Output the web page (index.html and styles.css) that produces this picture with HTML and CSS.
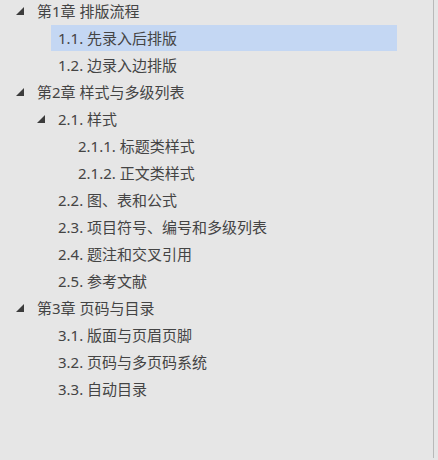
FILE: index.html
```html
<!DOCTYPE html>
<html lang="zh-CN">
<head>
<meta charset="utf-8">
<link rel="stylesheet" href="styles.css">
</head>
<body>
<div class="pane">
  <ul class="tree">
    <li class="row l1"><span class="tog"><svg viewBox="0 0 8 8" width="8" height="8"><polygon points="8,0 8,8 0,8"/></svg></span><span class="label">第1章 排版流程</span></li>
    <li class="row l2"><span class="tog"></span><span class="label sel">1.1. 先录入后排版</span></li>
    <li class="row l2"><span class="tog"></span><span class="label">1.2. 边录入边排版</span></li>
    <li class="row l1"><span class="tog"><svg viewBox="0 0 8 8" width="8" height="8"><polygon points="8,0 8,8 0,8"/></svg></span><span class="label">第2章 样式与多级列表</span></li>
    <li class="row l2"><span class="tog"><svg viewBox="0 0 8 8" width="8" height="8"><polygon points="8,0 8,8 0,8"/></svg></span><span class="label">2.1. 样式</span></li>
    <li class="row l3"><span class="tog"></span><span class="label">2.1.1. 标题类样式</span></li>
    <li class="row l3"><span class="tog"></span><span class="label">2.1.2. 正文类样式</span></li>
    <li class="row l2"><span class="tog"></span><span class="label">2.2. 图、表和公式</span></li>
    <li class="row l2"><span class="tog"></span><span class="label">2.3. 项目符号、编号和多级列表</span></li>
    <li class="row l2"><span class="tog"></span><span class="label">2.4. 题注和交叉引用</span></li>
    <li class="row l2"><span class="tog"></span><span class="label">2.5. 参考文献</span></li>
    <li class="row l1"><span class="tog"><svg viewBox="0 0 8 8" width="8" height="8"><polygon points="8,0 8,8 0,8"/></svg></span><span class="label">第3章 页码与目录</span></li>
    <li class="row l2"><span class="tog"></span><span class="label">3.1. 版面与页眉页脚</span></li>
    <li class="row l2"><span class="tog"></span><span class="label">3.2. 页码与多页码系统</span></li>
    <li class="row l2"><span class="tog"></span><span class="label">3.3. 自动目录</span></li>
  </ul>
</div>
</body>
</html>
```
FILE: styles.css
```css
html, body {
  margin: 0;
  padding: 0;
  background: #e6e6e6;
}
body {
  width: 438px;
  height: 460px;
  overflow: hidden;
  font-family: "Noto Sans", "Noto Sans CJK SC", sans-serif;
  font-size: 15px;
  color: #444444;
}
.pane {
  width: 433px;
  height: 460px;
  border-right: 1px solid #b9b9b9;
  box-sizing: content-box;
}
.tree {
  list-style: none;
  margin: -2px 0 0 0;
  padding: 0;
  width: 397px;
}
.row {
  display: flex;
  align-items: stretch;
  height: 26px;
  margin-bottom: 1px;
}
.l1 { padding-left: 16px; }
.l2 { padding-left: 37px; }
.l3 { padding-left: 57px; }
.tog {
  width: 14px;
  flex: none;
  display: flex;
  align-items: center;
}
.tog svg {
  display: block;
  fill: #3c3c3c;
}
.label {
  flex: 1;
  display: flex;
  align-items: center;
  padding-left: 7px;
  line-height: 26px;
  white-space: nowrap;
}
.sel {
  background: #c4d7f3;
}
```
